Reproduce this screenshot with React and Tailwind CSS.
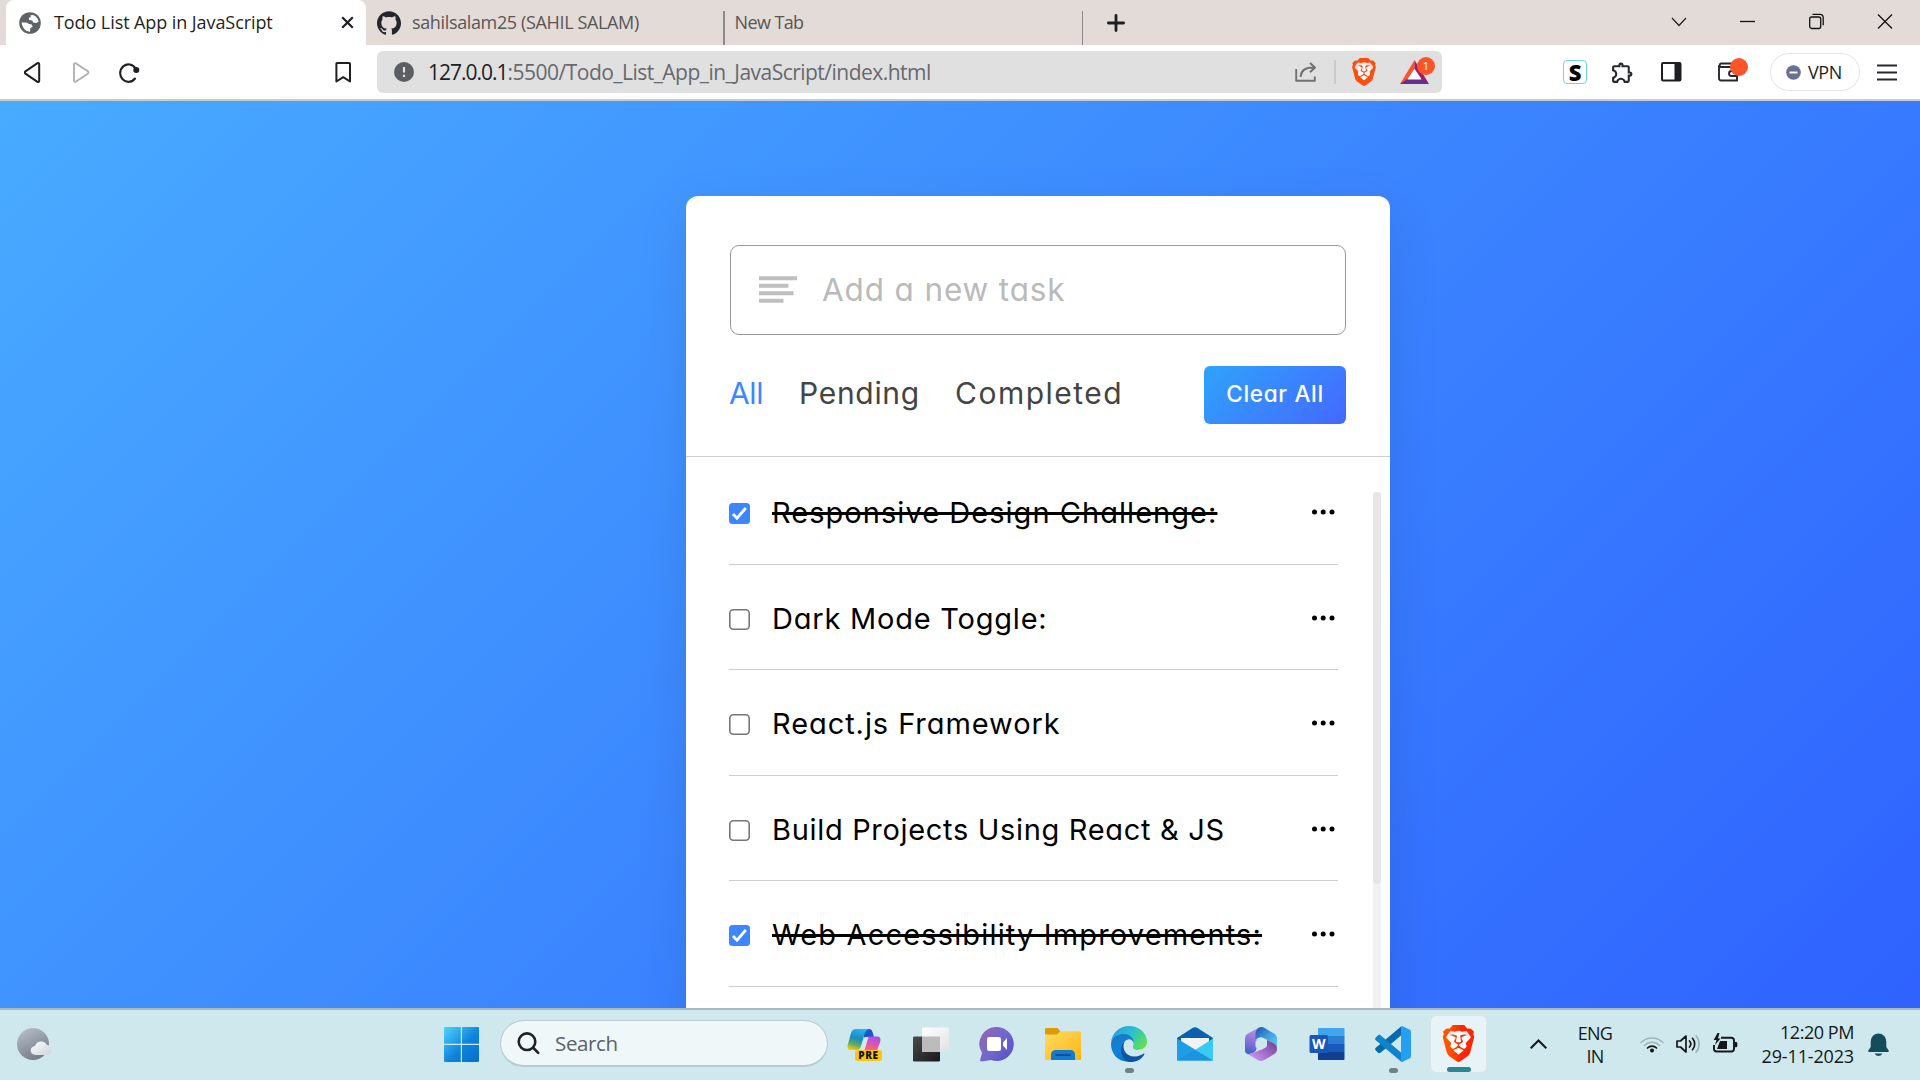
import { SiBrave, SiGithub } from "react-icons/si";
import { MdOutlineExtension } from "react-icons/md";

const tasks = [
  { name: "Responsive Design Challenge:", done: true, track: "tracking-[1.04px]" },
  { name: "Dark Mode Toggle:", done: false, track: "tracking-[0.78px]" },
  { name: "React.js Framework", done: false, track: "tracking-[0.93px]" },
  { name: "Build Projects Using React & JS", done: false, track: "tracking-[0.68px]" },
  { name: "Web Accessibility Improvements:", done: true, track: "tracking-[1.16px]" },
];

function BraveLion({ size, id, className = "" }) {
  return (
    <span className={`relative flex shrink-0 items-center justify-center ${className}`}>
      <svg width="0" height="0" className="absolute">
        <linearGradient id={id} x1="0" x2="1" y1="0" y2="0">
          <stop offset="0.2" stopColor="#ff5500" />
          <stop offset="0.6" stopColor="#ff2500" />
        </linearGradient>
      </svg>
      <span className="absolute h-3/5 w-1/2 rounded-full bg-white" />
      <SiBrave size={size} className="relative" style={{ fill: id === "lion" ? `url(#${id})` : "#fb4f12" }} />
    </span>
  );
}

function TabStrip() {
  return (
    <div className="flex h-[45px] shrink-0 items-start bg-[#e3dbd8] pl-1.5 text-[18px] text-[#5a5654]">
      <div className="flex h-[45px] w-[360px] items-center rounded-t-lg bg-white pl-[13px] text-[#1d1f23]">
        <svg width="22" height="22" viewBox="0 0 22 22">
          <circle cx="11" cy="11" r="10.8" fill="#5f6368" />
          <path d="M11.5 3.2 14 2.9c3 .9 5 3.4 5.7 6.5l-2.2 1.7-3.4-.5-.8-2.2-3.2-.4-.3-2.2 2-.7Z" fill="#fff" />
          <path d="M2.6 10.5h4.6l3 1.5 2.6.4.8 2.3-2.3 1.6-.3 3.4c-3.600-.100-7.600-3-8.400-9.200Z" fill="#fff" />
        </svg>
        <span className="mb-px ml-[13px] whitespace-nowrap font-medium tracking-[-0.080px]">Todo List App in JavaScript</span>
        <svg className="ml-auto mr-[12px]" width="13" height="13" viewBox="0 0 13 13" stroke="#1d1f23" strokeWidth="2.200">
          <path d="m1.200 1.200 10.600 10.600M11.800 1.200 1.200 11.800" />
        </svg>
      </div>
      <div className="flex h-[45px] w-[357px] items-center pl-[11px]">
        <SiGithub size={24} color="#23262d" />
        <span className="mb-px ml-[11px] whitespace-nowrap tracking-[-0.360px]">sahilsalam25 (SAHIL SALAM)</span>
      </div>
      <div className="mt-[11px] h-[34px] w-[1.5px] bg-[#8f8a87]" />
      <div className="flex h-[45px] w-[357px] items-center pl-[10px]">
        <span className="mb-px whitespace-nowrap tracking-[-0.600px]">New Tab</span>
      </div>
      <div className="mt-[11px] h-[34px] w-[1.5px] bg-[#8f8a87]" />
      <svg className="ml-[24px] mt-[14px]" width="18" height="18" viewBox="0 0 18 18" stroke="#1d1f23" strokeWidth="2.800" strokeLinecap="round">
        <path d="M9 1.400v15.200M1.400 9h15.200" />
      </svg>
      <div className="ml-auto mr-[27px] mt-[13px] flex h-[17px] items-center text-black">
        <svg width="16" height="10" viewBox="0 0 16 10" fill="none" stroke="#222" strokeWidth="1.200"><path d="m1 1 7 7.500L15 1" /></svg>
        <svg className="ml-[53px]" width="15" height="17" viewBox="0 0 15 17" stroke="#111" strokeWidth="1.300"><path d="M0 8.500h15" /></svg>
        <svg className="ml-[54px]" width="15" height="17" viewBox="0 0 15 17" fill="none" stroke="#111" strokeWidth="1.300">
          <rect x="0.700" y="4" width="11" height="11.500" rx="2" />
          <path d="M3.500 1.400h7.500a3.200 3.200 0 0 1 3.200 3.200v7.600" />
        </svg>
        <svg className="ml-[53px]" width="16" height="17" viewBox="0 0 16 17" stroke="#111" strokeWidth="1.300"><path d="m1 1.500 14 14M15 1.500l-14 14" /></svg>
      </div>
    </div>
  );
}

function Toolbar() {
  return (
    <div className="flex h-[56px] shrink-0 items-center border-b-2 border-[#cbcbcb] bg-white">
      <svg className="ml-6" width="17" height="21" viewBox="0 0 17 21" fill="none" stroke="#1d1f23" strokeWidth="2" strokeLinejoin="round"><path d="M13.500 1.200 1.400 9.300a1.500 1.500 0 0 0 0 2.400l12.100 8.100c.800.400 1.700 0 1.700-1V2.200c0-1-.900-1.400-1.700-1Z" /></svg>
      <svg className="ml-[32px]" width="17" height="21" viewBox="0 0 17 21" fill="none" stroke="#aeaeae" strokeWidth="1.800" strokeLinejoin="round"><path d="M2.700 1.200 14.800 9.300a1.500 1.500 0 0 1 0 2.400L2.700 19.800c-.800.400-1.700 0-1.700-1V2.200c0-1 .900-1.400 1.700-1Z" /></svg>
      <svg className="ml-[29px]" width="22" height="21" viewBox="0 0 22 21" fill="none" stroke="#1d1f23" strokeWidth="2.100" strokeLinecap="round">
        <path d="M16.500 6.500A8.300 8.700 0 1 0 16 16.500" />
        <circle cx="17.300" cy="8" r="2" fill="#1d1f23" />
      </svg>
      <svg className="ml-[194px]" width="17" height="21" viewBox="0 0 17 21" fill="none" stroke="#1d1f23" strokeWidth="2" strokeLinejoin="round"><path d="M2.200 1h12a.8.8 0 0 1 .8.8v17.700l-6.800-4.300-6.800 4.300V1.800A.8.8 0 0 1 2.200 1Z" /></svg>
      <div className="ml-[25px] flex h-[42px] w-[1065px] items-center rounded-md bg-[#e0e0e0] pl-[17px] pr-1">
        <svg width="20" height="20" viewBox="0 0 20 20">
          <circle cx="10" cy="10" r="10" fill="#5b5f64" />
          <path d="M10 5v5.500M10 12.700v2.200" stroke="#e0e0e0" strokeWidth="2.200" />
        </svg>
        <span className="ml-3.5 mt-0.5 flex whitespace-nowrap text-[21px] text-[#66696d]">
          <span className="tracking-[-1px] text-[#202124]">127.0.0.1</span>
          <span className="tracking-[-0.520px]">:5500/Todo_List_App_in_JavaScript/index.html</span>
        </span>
        <svg className="ml-auto" width="22" height="22" viewBox="0 0 22 22" fill="none" stroke="#717171" strokeWidth="1.900" strokeLinejoin="round">
          <path d="M1.200 8v11.800h18.600v-4.300" />
          <path d="M5.500 16c.5-6 4-10 13.500-9.500M15 2l5 4.500-5 4.800" />
        </svg>
        <div className="ml-[17px] h-6 w-[2px] bg-[#cacaca]" />
        <BraveLion size={28} id="shield" className="ml-[14px]" />
        <span className="relative ml-[22px] h-7 w-[38px]">
          <svg width="30" height="28" viewBox="0 0 30 28">
            <path d="M14.500 2 0 26l7-4 7.500-11Z" fill="#fb542b" />
            <path d="M14.500 2 29 26l-7-4-7.500-11Z" fill="#9e1f63" />
            <path d="M0 26h29l-6.500-5H7Z" fill="#662d91" />
            <path d="m14.500 11 7 10.500H7.500Z" fill="#fff" />
          </svg>
          <span className="absolute right-[3px] top-[-1px] flex size-[18px] items-center justify-center rounded-full bg-[#fb542b] text-[11px] text-white">1</span>
        </span>
      </div>
      <span className="ml-[121px] flex size-6 items-center justify-center rounded-sm border border-[#74d2f4] text-[22px] font-extrabold leading-none text-black">S</span>
      <MdOutlineExtension className="ml-[23px]" size={25} color="#26282d" />
      <svg className="ml-[26px]" width="21" height="20" viewBox="0 0 21 20">
        <rect x="1" y="1" width="18.500" height="17.500" rx="1" fill="#fff" stroke="#1d1f23" strokeWidth="2" />
        <path d="M13.500 1h6v17.500h-6Z" fill="#1d1f23" />
      </svg>
      <span className="relative ml-[36px] h-5 w-[32px]">
        <svg width="21" height="20" viewBox="0 0 21 20" fill="none" stroke="#26282d" strokeWidth="1.900">
          <path d="M18.500 5V1.500H3a1.800 1.800 0 0 0 0 3.500h16v13.500H3a2 2 0 0 1-2-2V3.200" />
          <path d="M19 9h-5.500a2.500 2.500 0 0 0 0 5H19" />
        </svg>
        <span className="absolute right-0.5 top-[-4px] size-[18px] rounded-full bg-[#fb542b]" />
      </span>
      <div className="ml-[20px] flex h-[38px] w-[90px] items-center rounded-full border border-[#e4e4e6] pl-[15px] text-[18px] text-[#1d1f23]">
        <svg width="15" height="15" viewBox="0 0 15 15"><circle cx="7.500" cy="7.500" r="7.300" fill="#6b7090" /><path d="M3.500 7.500h8" stroke="#fff" strokeWidth="1.900" /></svg>
        <span className="ml-[7px] tracking-[-0.400px]">VPN</span>
      </div>
      <svg className="ml-[17px]" width="20" height="17" viewBox="0 0 20 17" stroke="#26282d" strokeWidth="2"><path d="M0 1.500h20M0 8.500h20M0 15.500h20" /></svg>
    </div>
  );
}

function Checkbox({ checked }) {
  return checked ? (
    <svg width="21" height="21" viewBox="0 0 21 21" className="shrink-0">
      <rect width="21" height="21" rx="3.500" fill="#3c87ff" />
      <path d="m4 11 4 4.200L16.800 5" fill="none" stroke="#fff" strokeWidth="2.800" />
    </svg>
  ) : (
    <svg width="21" height="21" viewBox="0 0 21 21" className="shrink-0">
      <rect x="0.800" y="0.800" width="19.400" height="19.400" rx="3.500" fill="#fff" stroke="#767676" strokeWidth="1.600" />
    </svg>
  );
}

function TodoCard() {
  return (
    <div className="ml-[685.500px] mt-[95px] flex h-[900px] w-[704.500px] shrink-0 flex-col rounded-[12px] bg-white font-['Inter',sans-serif] shadow-[0_17px_52px_rgba(0,0,0,0.1)] [font-feature-settings:'cv11']">
      <div className="ml-[44.500px] mt-[48.500px] flex h-[90.500px] w-[616px] shrink-0 items-center rounded-[9px] border border-[#999] pl-[28px]">
        <svg width="38" height="27" viewBox="0 0 38 27" fill="#bfbfbf">
          <path d="M0 .200h38v4H0ZM0 7.700h29.500v4H0ZM0 15.200h34.500v4H0ZM0 22.700h24.500v4H0Z" />
        </svg>
        <span className="ml-[25px] text-[31.500px] font-[370] tracking-[0.850px] text-[#bababa]">Add a new task</span>
      </div>
      <div className="ml-[44.500px] mt-[31px] flex h-[58px] w-[616px] shrink-0 items-center text-[30px] font-[370] text-[#444]">
        <span className="mb-[3px] ml-[-1px] w-[70px] tracking-[-0.400px] text-[#3c87ff]">All</span>
        <span className="mb-[3px] w-[156px] tracking-[0.700px]">Pending</span>
        <span className="mb-[3px] tracking-[1.500px]">Completed</span>
        <span className="ml-auto flex h-[58px] w-[142px] items-center justify-center rounded-[6px] bg-[linear-gradient(135deg,#2fa3fb_0%,#4468ff_100%)] pb-0.5 text-[22.500px] font-medium tracking-[0.700px] text-white">Clear All</span>
      </div>
      <div className="mt-[32px] h-px shrink-0 bg-[#ccc]" />
      <div className="flex grow">
        <div className="ml-[43.500px] mt-[2px] w-[609px]">
          {tasks.map((t) => (
            <div key={t.name} className="flex h-[105.500px] items-center border-b border-[#ccc] pt-[3px]">
              <span className="mt-[2px] flex"><Checkbox checked={t.done} /></span>
              <span className={`ml-[22px] whitespace-nowrap text-[29px] font-[370] text-black ${t.track} ${t.done ? "line-through decoration-[2.500px]" : ""}`}>{t.name}</span>
              <svg className="mb-px ml-auto mr-[3px]" width="24" height="6" viewBox="0 0 24 6"><circle cx="3.500" cy="3" r="2.500" /><circle cx="12.200" cy="3" r="2.500" /><circle cx="21" cy="3" r="2.500" /></svg>
            </div>
          ))}
        </div>
        <div className="ml-[35px] mt-[35px] w-[8px] rounded-full bg-[#f1f1f1]">
          <div className="h-[392px] rounded-full bg-[#e6e6e6]" />
        </div>
      </div>
    </div>
  );
}

const appIcons = [
  {
    name: "copilot",
    art: (
      <svg width="36" height="36" viewBox="0 0 36 36">
        <defs>
          <linearGradient id="cpA" x1="0.600" y1="0" x2="0.300" y2="1"><stop offset="0" stopColor="#27b4f0" /><stop offset="0.450" stopColor="#1a8bc4" /><stop offset="0.750" stopColor="#5eae5e" /><stop offset="1" stopColor="#f5c50c" /></linearGradient>
          <linearGradient id="cpB" x1="0.600" y1="0" x2="0.300" y2="1"><stop offset="0" stopColor="#a64df0" /><stop offset="0.600" stopColor="#ee5a9a" /><stop offset="1" stopColor="#ff7a55" /></linearGradient>
        </defs>
        <path d="M17 3h5c2 0 3 1 3.500 3l1.500 5h-5c-3 0-4 2-5 5Z" fill="#1a55cf" />
        <path d="M9 3h13c-3 1-4 3-5 7l-3 10c-1 3-2 4-5 4H4c-3 0-4-2-3.300-5L4 7c1-3 2.500-4 5-4Z" fill="url(#cpA)" />
        <path d="M21 10.500h9c3 0 4 2 3.300 5L31 22c-1 3-3 4-5 4H12c3-1 4-2 5-5l2.500-8Z" fill="url(#cpB)" />
        <path d="M17.500 11h4l-4 13h-4Z" fill="#d5e9f0" />
        <rect x="8" y="24" width="27" height="11" rx="2.500" fill="#ffc50a" />
        <text x="21.500" y="33" textAnchor="middle" fontFamily="Open Sans, sans-serif" fontWeight="800" fontSize="10" letterSpacing="0.600" fill="#111">PRE</text>
      </svg>
    ),
  },
  {
    name: "taskview",
    art: (
      <svg width="36" height="36" viewBox="0 0 36 36">
        <defs>
          <linearGradient id="tvA" x1="0" y1="0" x2="1" y2="1"><stop offset="0" stopColor="#4a4a49" /><stop offset="1" stopColor="#191919" /></linearGradient>
          <linearGradient id="tvB" x1="0" y1="0" x2="1" y2="1"><stop offset="0" stopColor="#fff" /><stop offset="1" stopColor="#dfe2e4" /></linearGradient>
        </defs>
        <rect x="0" y="10.500" width="27" height="25" rx="1.200" fill="url(#tvA)" />
        <rect x="9" y="1.500" width="27" height="24.500" rx="1.200" fill="url(#tvB)" />
        <path d="M9 10.500h18V26H9Z" fill="#bcbcbc" />
      </svg>
    ),
  },
  {
    name: "chat",
    art: (
      <svg width="36" height="36" viewBox="0 0 36 36">
        <defs><linearGradient id="chA" x1="0.100" y1="0.200" x2="0.900" y2="0.800"><stop offset="0" stopColor="#8f66b5" /><stop offset="0.500" stopColor="#6f68cf" /><stop offset="1" stopColor="#5b56c6" /></linearGradient></defs>
        <path d="M18 1a17 17 0 1 1-6 33l-9.500 1.500c-1 .1-1.700-.6-1.400-1.600L3 27A17 17 0 0 1 18 1Z" fill="url(#chA)" />
        <rect x="8" y="11" width="14" height="14" rx="2.200" fill="#fff" />
        <path d="M24 16.500 28 12v12l-4-4.500Z" fill="#fff" />
      </svg>
    ),
  },
  {
    name: "files",
    art: (
      <svg width="36" height="36" viewBox="0 0 36 36">
        <defs><linearGradient id="flA" x1="0" y1="0" x2="1" y2="1"><stop offset="0" stopColor="#ffdb66" /><stop offset="1" stopColor="#fbb70e" /></linearGradient></defs>
        <path d="M0 3.500C0 2.500.700 2 1.500 2h10c1 0 1.500.300 2 1l2 2.500V11H0Z" fill="#dc9c06" />
        <path d="M0 8.500h11c1 0 1.500-.300 2-.800l1.500-1.700c.5-.5 1-.700 2-.700h18c.800 0 1.500.500 1.500 1.500V34H0Z" fill="url(#flA)" />
        <path d="M6 34v-5.500C6 25.500 8 24 10.500 24h15c2.500 0 4.500 1.500 4.500 4.500V34Z" fill="#1479d0" />
        <path d="M11 29h14" stroke="#0b4f96" strokeWidth="1.800" strokeLinecap="round" />
      </svg>
    ),
  },
  {
    name: "edge",
    dot: true,
    art: (
      <svg width="36" height="36" viewBox="0 0 36 36">
        <defs>
          <linearGradient id="edA" x1="0" y1="0.200" x2="1" y2="0.700"><stop offset="0" stopColor="#2a9be2" /><stop offset="0.500" stopColor="#2bc0cf" /><stop offset="1" stopColor="#63e04f" /></linearGradient>
          <linearGradient id="edB" x1="0" y1="0" x2="0.500" y2="1"><stop offset="0" stopColor="#1b76bd" /><stop offset="0.600" stopColor="#0f84dc" /><stop offset="1" stopColor="#0d70cc" /></linearGradient>
        </defs>
        <path d="M0 17C.500 7 8.500 0 18 0c10.500 0 18 7.500 18 15.500C36 21 32 24 27 24c-4 0-6-1.500-5-3.500C24 16 21 12 15 11 8 10 1.500 13 0 17Z" fill="url(#edA)" />
        <path d="M0 18c.700-6.500 6.500-10 12.500-10 7 0 10.500 4.500 10 8.500-1-2-2.500-3-4.500-3-3.500 0-6 3-6 7.500 0 7 5 12 11 14C9 38.500 0 29 0 18Z" fill="url(#edB)" />
        <path d="M14 15c-4 6 0 15 9 15.500 4 .200 7.500-1.500 9-2.800 1-.800 1.800 0 1.200 1C30 34 24 36.500 18.500 36 10 34 7 21 14 15Z" fill="#0d559f" />
        <path d="M18 13.500c3 0 5 2.500 3.700 6.200-.900 2.600 1.300 4.300 5.300 4.300 3 0 5.500-1 7-2.700l-.500 5.500c-2.500 2.200-6 2.900-9.500 2.200-6-1.200-10-5-10-9.500 0-3.500 1.600-6 4-6Z" fill="#cfe7ee" />
      </svg>
    ),
  },
  {
    name: "mail",
    art: (
      <svg width="36" height="36" viewBox="0 0 36 36">
        <path d="M0 12 15.500 2c1.500-1 3.500-1 5 0L36 12v5H0Z" fill="#0961ae" />
        <path d="M4 12h28v7l-14 8-14-8Z" fill="#f3f3f4" />
        <path d="M0 12.500 36 34.500H0Z" fill="#1e9ee8" />
        <path d="M36 12.500 18 24l18 10.500Z" fill="#3acbf5" />
        <path d="m18 23.700 18 10.800H0Z" fill="#1c95df" />
      </svg>
    ),
  },
  {
    name: "m365",
    art: (
      <svg width="36" height="36" viewBox="0 0 36 36">
        <defs>
          <linearGradient id="msA" x1="0.500" y1="0" x2="0.300" y2="1"><stop offset="0" stopColor="#b993e8" /><stop offset="0.500" stopColor="#8f74da" /><stop offset="1" stopColor="#3b62c4" /></linearGradient>
          <linearGradient id="msB" x1="0" y1="0" x2="1" y2="1"><stop offset="0" stopColor="#1d4fae" /><stop offset="0.500" stopColor="#3f9fdc" /><stop offset="1" stopColor="#58d5fb" /></linearGradient>
          <linearGradient id="msC" x1="1" y1="0" x2="0" y2="0.800"><stop offset="0" stopColor="#643d8c" /><stop offset="0.500" stopColor="#a068c6" /><stop offset="1" stopColor="#cf97f3" /></linearGradient>
        </defs>
        <path d="M15 2 5 7.500c-2 1.200-3 2.800-3 5V24c0 2.500 1.300 4 3.500 4 4 0 8-2.500 8-5.500v-12C13.500 7 14 4.500 17 1.200Z" fill="url(#msA)" />
        <path d="M17 1.200c1.500-.500 3-.200 4 .400l10 6c2 1.200 3 2.800 3 5V22c0-2-1.500-4-3.500-5l-10-5c-3-1.300-5-.600-8 2V8c0-3 2-6 4.500-6.800Z" fill="url(#msB)" />
        <path d="m5 28.300 9-2.800L24 20v-6l6.500 3c2 1 3.500 3 3.500 5.500 0 3-1 4.500-3 5.700l-10 6c-2 1.100-4 1.100-6 0Z" fill="url(#msC)" />
        <path d="m18 12.500 5.500 3V21L18 24l-5.500-3v-5.500Z" fill="#cfe7ee" />
      </svg>
    ),
  },
  {
    name: "word",
    art: (
      <svg width="36" height="36" viewBox="0 0 36 36">
        <path d="M9 3c0-.600.500-1 1-1h24.500c.600 0 1 .400 1 1v7H9Z" fill="#41a5ee" />
        <path d="M9 10h26.500v8H9Z" fill="#2b7cd3" />
        <path d="M9 18h26.500v8H9Z" fill="#185abd" />
        <path d="M9 26h26.500v7c0 .600-.400 1-1 1H10c-.600 0-1-.400-1-1Z" fill="#103f91" />
        <rect x="0.500" y="9" width="18.500" height="18" rx="1.500" fill="#1b57b7" />
        <text x="9.800" y="22.700" textAnchor="middle" fontFamily="Open Sans, sans-serif" fontWeight="700" fontSize="14" fill="#fff">W</text>
      </svg>
    ),
  },
  {
    name: "code",
    dot: true,
    art: (
      <svg width="36" height="36" viewBox="0 0 36 36">
        <path d="M26 .500v9L5.500 26.700c-.800.600-1.700.600-2.400 0L.800 24.500c-.900-.800-.900-2 0-2.800Z" fill="#0569ad" />
        <path d="M26 35.500v-9L5.500 9.300c-.800-.600-1.700-.600-2.400 0L.800 11.500c-.900.800-.900 2 0 2.800Z" fill="#0d84cd" />
        <path d="M26 .500c.600-.500 1-.400 1.600-.200L34.500 3.600c1 .500 1.500 1.200 1.500 2.300v24.200c0 1.100-.500 1.800-1.500 2.300l-6.900 3.300c-.600.300-1.200.300-1.600-.2Z" fill="#269ff0" />
      </svg>
    ),
  },
];

function Taskbar() {
  return (
    <div className="flex h-[72px] shrink-0 items-center border-t-2 border-[#aab9bd] bg-[#cfe8ee] text-[18px] text-[#14181a]">
      <svg className="mb-0.5 ml-[17px]" width="35" height="34" viewBox="0 0 35 34">
        <defs>
          <linearGradient id="moon" x1="0.200" y1="0" x2="0.700" y2="1"><stop offset="0" stopColor="#b4bec8" /><stop offset="1" stopColor="#727a83" /></linearGradient>
          <linearGradient id="cloud" x1="0" y1="0" x2="1" y2="1"><stop offset="0" stopColor="#fff" /><stop offset="1" stopColor="#ccd4dc" /></linearGradient>
        </defs>
        <circle cx="16" cy="17" r="16" fill="url(#moon)" />
        <path d="M18.500 28a4.500 4.500 0 0 1-.5-9 6.500 6.500 0 0 1 12-1 5 5 0 0 1-.5 10Z" fill="url(#cloud)" />
      </svg>
      <svg className="mb-px ml-[392px]" width="35" height="35" viewBox="0 0 35 35">
        <defs><linearGradient id="win" gradientUnits="userSpaceOnUse" x1="0" y1="0" x2="32" y2="32"><stop offset="0" stopColor="#4fd3ff" /><stop offset="0.600" stopColor="#0f84dc" /><stop offset="1" stopColor="#0574d0" /></linearGradient></defs>
        <path d="M1 0h15.800v16.800H0V1a1 1 0 0 1 1-1ZM18 0h16a1 1 0 0 1 1 1v15.800H18ZM0 18h16.800v17H1a1 1 0 0 1-1-1ZM18 18h17v16a1 1 0 0 1-1 1H18Z" fill="url(#win)" />
      </svg>
      <div className="mb-[3px] ml-[21px] flex h-[47px] w-[328px] items-center rounded-full border border-b-2 border-[#b4ccd2] bg-[#f0f7f9] pl-[16px] text-[20.500px] text-[#5b6265]">
        <svg width="23" height="23" viewBox="0 0 23 23" fill="none" stroke="#222" strokeWidth="2.600" strokeLinecap="round"><circle cx="10" cy="9.700" r="8.300" /><path d="m16.500 16 4.700 4.800" /></svg>
        <span className="ml-[15px] mt-px tracking-[-0.350px]">Search</span>
      </div>
      <div className="ml-[4px] flex h-full items-center">
        {appIcons.map((a) => (
          <div key={a.name} className="relative flex h-full w-[66px] items-center justify-center pb-[3px]">
            {a.art}
            {a.dot && <span className="absolute bottom-[7px] h-[5px] w-[9px] rounded-full bg-[#718285]" />}
          </div>
        ))}
        <div className="relative mb-[3px] ml-[4px] flex h-[58px] w-[57px] items-center justify-center rounded-[6px] border border-[#d8e6ea] bg-[#e7f3f7]">
          <BraveLion size={37} id="lion" />
          <span className="absolute bottom-0 h-[5px] w-6 rounded-full bg-[#2a8694]" />
        </div>
      </div>
      <svg className="mb-0.5 ml-auto mr-[30px]" width="17" height="10" viewBox="0 0 17 10" fill="none" stroke="#14181a" strokeWidth="2"><path d="M.700 9.200 8.500 1.500l7.800 7.700" /></svg>
      <div className="mb-px mr-[27px] flex w-[36px] flex-col items-center leading-[22.500px]">
        <span className="tracking-[-0.700px]">ENG</span>
        <span className="tracking-[-0.700px]">IN</span>
      </div>
      <svg className="mb-[3px]" width="24" height="18" viewBox="0 0 24 18" fill="none" strokeLinecap="round">
        <path d="M1 7.500a15.500 15.500 0 0 1 22 0" stroke="#9fb4b9" strokeWidth="1.500" />
        <path d="M4.500 10.500a10.500 10.500 0 0 1 15 0" stroke="#9fb4b9" strokeWidth="1.500" />
        <path d="M7.500 13a6.500 6.500 0 0 1 9 0" stroke="#14181a" strokeWidth="1.700" />
        <circle cx="12" cy="15.500" r="2" fill="#14181a" />
      </svg>
      <svg className="mb-0.5 ml-3" width="25" height="20" viewBox="0 0 25 20" fill="none" strokeWidth="1.700" strokeLinecap="round" strokeLinejoin="round">
        <path d="M1 7v6h3.500l5.500 5V2L4.500 7Z" stroke="#14181a" />
        <path d="M13.500 7a4.500 4.500 0 0 1 0 6M16.500 4.300a8.500 8.500 0 0 1 0 11.400" stroke="#14181a" />
        <path d="M20 1.800a12.500 12.500 0 0 1 0 16.400" stroke="#9fb4b9" />
      </svg>
      <svg className="mb-[5px] ml-3" width="25" height="20" viewBox="0 0 25 20">
        <path d="M8 4.800h10.500a2.500 2.500 0 0 1 2.500 2.500V16a2.500 2.500 0 0 1-2.500 2.500H3.500A2.500 2.500 0 0 1 1 16v-4" fill="none" stroke="#14181a" strokeWidth="1.900" />
        <path d="M22 9h1a1.300 1.300 0 0 1 1.300 1.300V13a1.300 1.300 0 0 1-1.300 1.300h-1Z" fill="#14181a" />
        <path d="M7 8h7v8H4Z" fill="#14181a" />
        <path d="M4.500 0 .700 7H3.500L2 12l5.500-6.500H5L6.500 0Z" fill="#14181a" />
      </svg>
      <div className="mb-[3px] ml-[23px] flex w-[93px] flex-col items-end leading-[24px]">
        <span className="whitespace-nowrap tracking-[-0.450px]">12:20 PM</span>
        <span className="whitespace-nowrap tracking-[-0.150px]">29-11-2023</span>
      </div>
      <svg className="ml-[14px] mr-[31px]" width="21" height="24" viewBox="0 0 21 24" fill="#134d5c">
        <path d="M10.500.500a7.800 7.800 0 0 1 7.800 7.800v5.700l2.400 3.500c.4.700 0 1.500-.700 1.500H1c-.700 0-1.100-.800-.700-1.500L2.700 14V8.300A7.800 7.800 0 0 1 10.500.500ZM6.700 20.500h7.600a3.900 3.200 0 0 1-7.600 0Z" />
      </svg>
    </div>
  );
}

export default function App() {
  return (
    <div className="flex h-[1080px] w-[1920px] flex-col overflow-hidden font-['Open_Sans',sans-serif]">
      <TabStrip />
      <Toolbar />
      <main className="flex h-[907px] shrink-0 flex-col items-start overflow-hidden bg-[linear-gradient(135deg,#48abff,#2f62ff)]">
        <TodoCard />
      </main>
      <Taskbar />
    </div>
  );
}
